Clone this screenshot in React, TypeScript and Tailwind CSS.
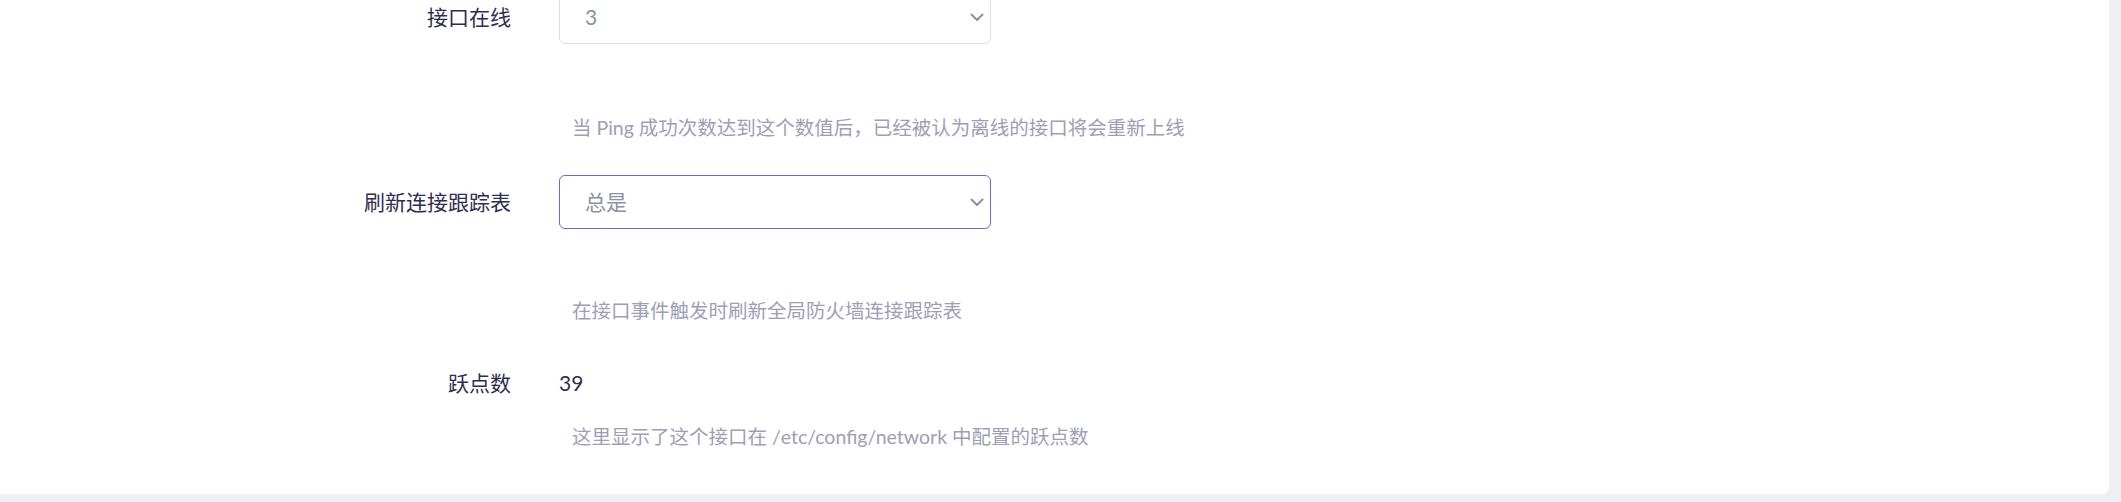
import React from "react";

const Chevron = () => (
  <svg width="14" height="9" viewBox="0 0 14 9" fill="none">
    <path d="M1.5 1.5 L7 7 L12.5 1.5" stroke="#8792a3" strokeWidth="2" strokeLinecap="round" strokeLinejoin="round" />
  </svg>
);

const font = { fontFamily: '"Lato", "Noto Sans CJK SC", sans-serif' };

export default function App() {
  return (
    <div className="w-[2121px] h-[502px] bg-[#eff0f3] overflow-hidden" style={font}>
      <div className="w-[2109px] h-[494px] bg-white rounded-br-[7px] flex flex-col">
        <div className="-mt-[10px] flex flex-col">
          {/* Row 1 */}
          <div className="flex">
            <div className="w-[511px] h-[54px] flex items-center justify-end text-[21px] text-[#2e2e52]">
              接口在线
            </div>
            <div className="ml-[48px] w-[432px]">
              <div className="h-[54px] border border-[#dcdfe6] rounded-[6px] flex items-center justify-between pl-[25px] pr-[6px] text-[21px] text-[#8792a3]">
                <span>3</span>
                <Chevron />
              </div>
              <div className="mt-[69px] pl-[13px] text-[19.5px] leading-[30px] whitespace-nowrap text-[#9e9eb6]">
                当 Ping 成功次数达到这个数值后，已经被认为离线的接口将会重新上线
              </div>
            </div>
          </div>
          {/* Row 2 */}
          <div className="flex mt-[32px]">
            <div className="w-[511px] h-[54px] flex items-center justify-end text-[21px] text-[#2e2e52]">
              刷新连接跟踪表
            </div>
            <div className="ml-[48px] w-[432px]">
              <div className="h-[54px] border border-[#5d6fe0] rounded-[6px] flex items-center justify-between pl-[25px] pr-[6px] text-[21px] text-[#8792a3]">
                <span>总是</span>
                <Chevron />
              </div>
              <div className="mt-[67px] pl-[13px] text-[19.5px] leading-[30px] whitespace-nowrap text-[#9e9eb6]">
                在接口事件触发时刷新全局防火墙连接跟踪表
              </div>
            </div>
          </div>
          {/* Row 3 */}
          <div className="flex mt-[30px]">
            <div className="w-[511px] h-[54px] flex items-center justify-end text-[21px] text-[#2e2e52]">
              跃点数
            </div>
            <div className="ml-[48px] w-[432px]">
              <div className="h-[54px] flex items-center text-[21px] text-[#2e2e52]">39</div>
              <div className="mt-[12px] pl-[13px] text-[19.5px] leading-[30px] whitespace-nowrap text-[#9e9eb6]">
                这里显示了这个接口在 /etc/config/network 中配置的跃点数
              </div>
            </div>
          </div>
        </div>
      </div>
    </div>
  );
}
